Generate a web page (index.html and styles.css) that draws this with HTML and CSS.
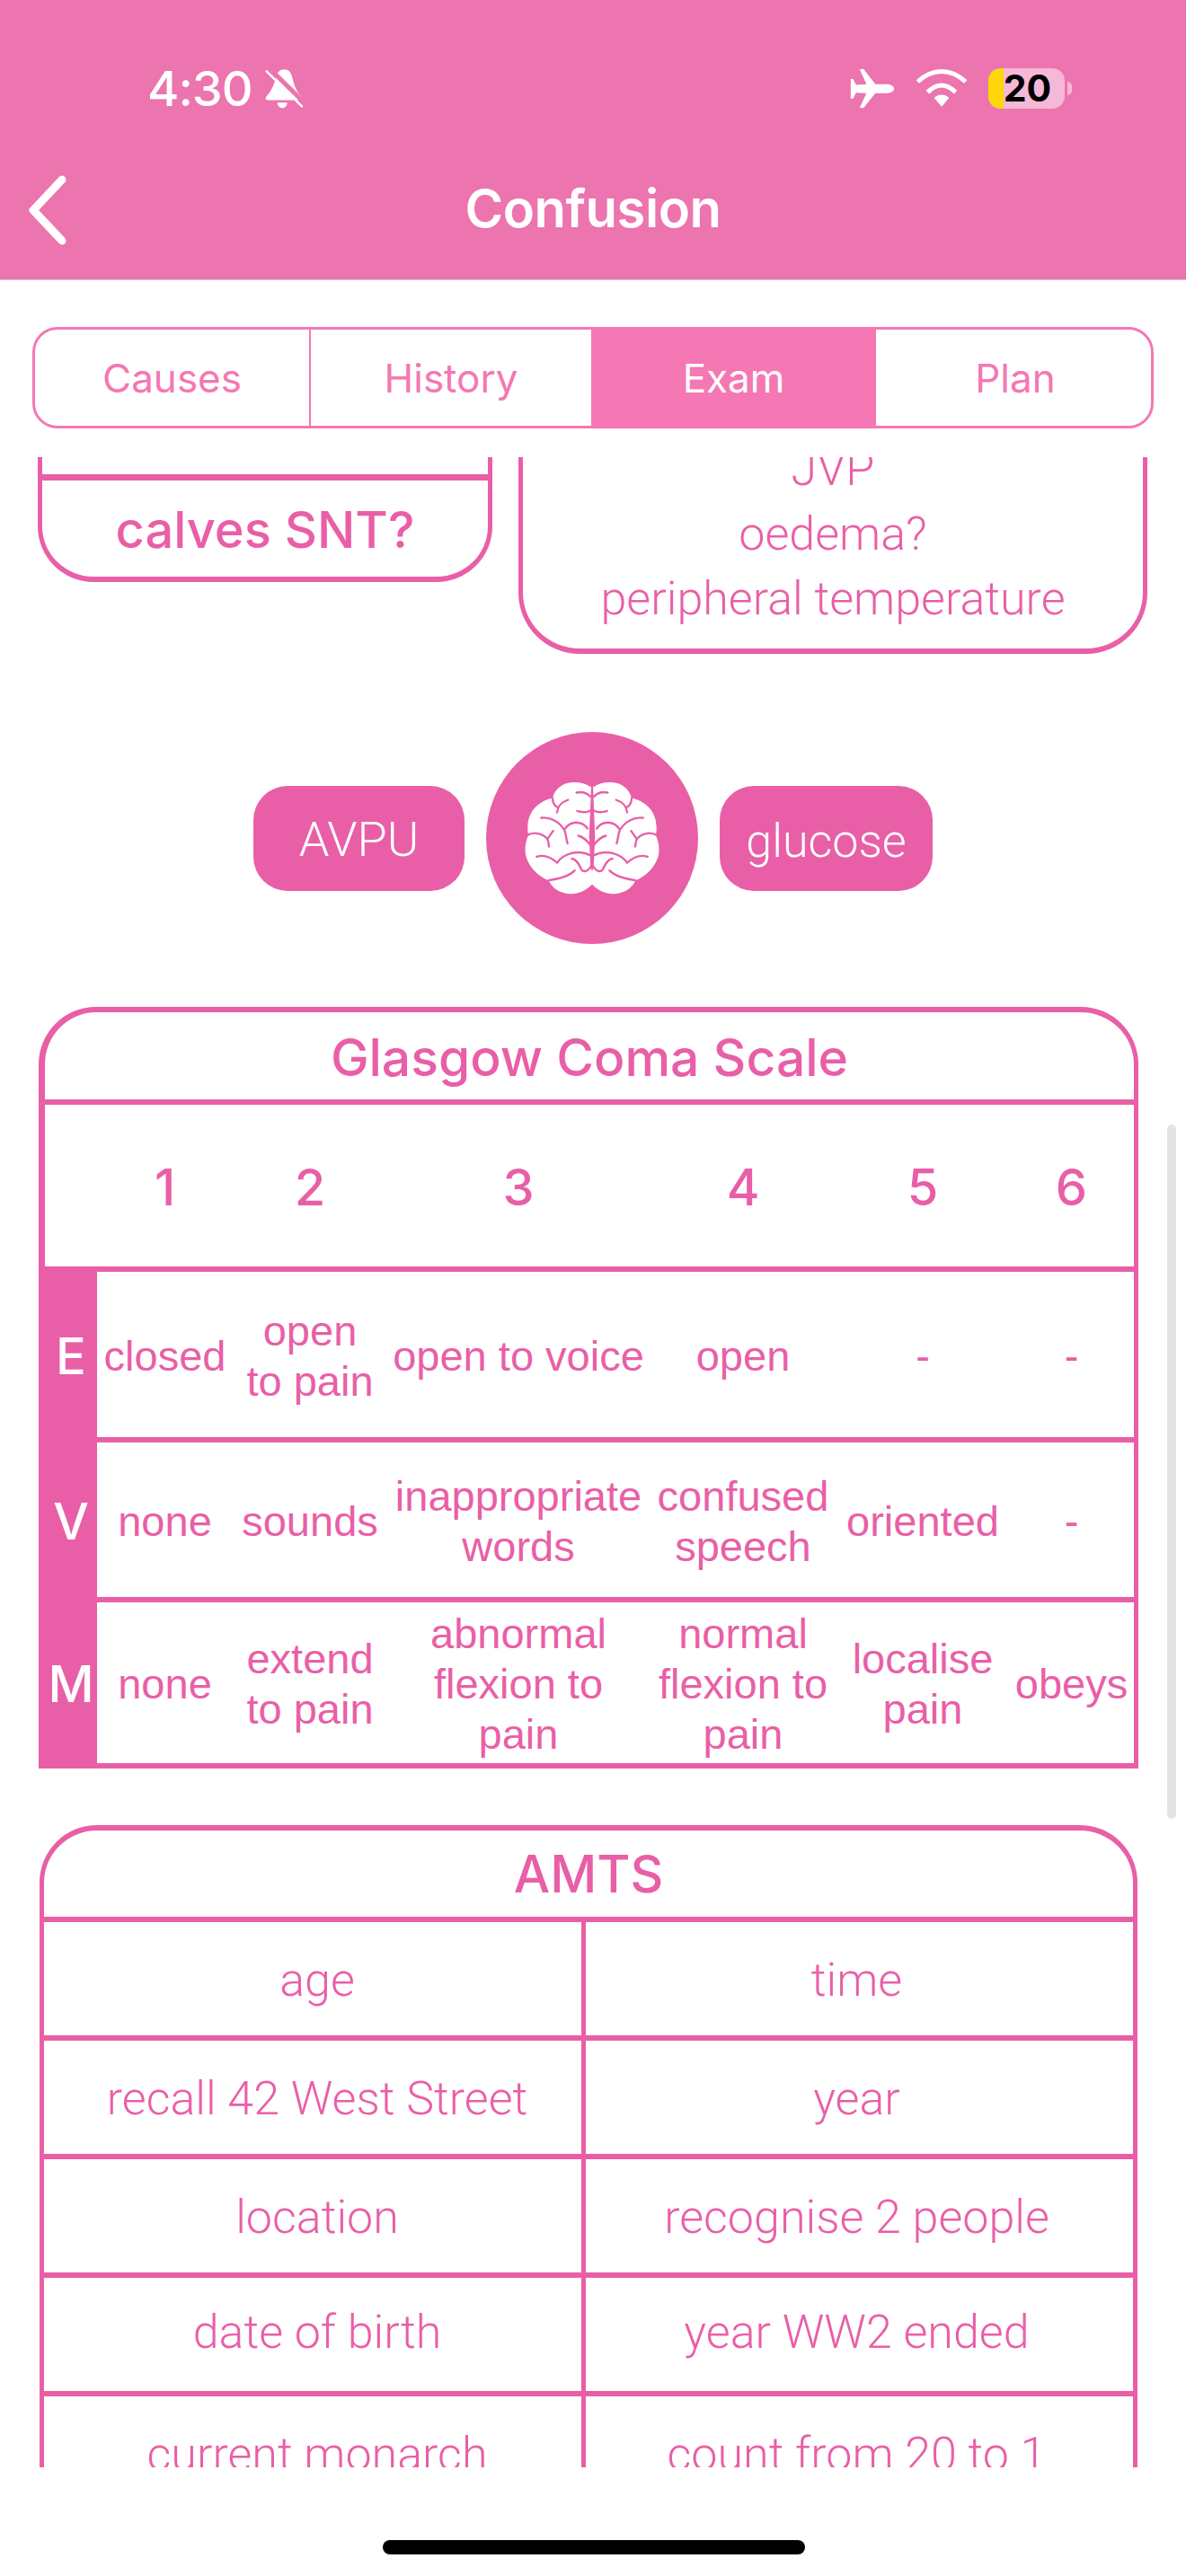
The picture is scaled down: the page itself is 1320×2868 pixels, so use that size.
FILE: index.html
```html
<!DOCTYPE html>
<html lang="en">
    <head>
        <meta charset="UTF-8" />
        <meta name="viewport" content="width=device-width, initial-scale=1.0" />
        <title>Confusion</title>
        <link rel="stylesheet" href="styles.css">
    </head>
    <body>
        <header class="top-bar">
            <div class="status-bar">
                <div class="status-left">
                    <span class="clock">4:30</span>
                    <svg class="icon-bell" viewBox="462 78 128 134">
                        <path fill="#fff" d="M526 82C540 82 548 92 552 108C558 135 566 155 582 172C586 178 584 184 576 184H472C464 184 462 178 466 172C482 155 492 135 498 108C502 92 512 82 526 82Z" />
                        <path fill="#fff" d="M502 192H536C534 204 526 210 519 210C512 210 504 204 502 192Z" />
                        <path stroke="#ec74af" stroke-width="15" d="M478 80L596 196" />
                        <path stroke="#fff" stroke-width="7" stroke-linecap="round" d="M467 88L584 204" />
                    </svg>
                </div>
                <div class="status-right">
                    <svg class="icon-plane" viewBox="80 76 150 136">
                        <path fill="#fff" d="M228 145C228 135 215 130 200 130H165L125 78L112 80L135 130L100 132L90 112H82V178H90L100 158L135 160L112 208L125 210L165 160H200C215 160 228 155 228 145Z" />
                    </svg>
                    <svg class="icon-wifi" viewBox="298 76 174 126">
                        <path fill="none" stroke="#fff" stroke-width="15" d="M305 118C355 72 415 72 465 118" />
                        <path fill="none" stroke="#fff" stroke-width="15" d="M338 153C370 122 400 122 432 153" />
                        <path fill="#fff" d="M360 172C375 158 395 158 410 172L385 201Z" />
                    </svg>
                    <div class="battery">
                        <div class="battery-body">
                            <span class="battery-level"></span>
                            <span class="battery-num">20</span>
                        </div>
                        <span class="battery-nub"></span>
                    </div>
                </div>
            </div>
            <div class="nav-bar">
                <svg class="icon-back" viewBox="0 0 46 78">
                    <path fill="none" stroke="#fff" stroke-width="9" stroke-linecap="round" stroke-linejoin="round" d="M39 5L7 39L39 73" />
                </svg>
                <h1>Confusion</h1>
            </div>
        </header>

        <nav class="tabs">
            <a class="tab">Causes</a>
            <a class="tab">History</a>
            <a class="tab active">Exam</a>
            <a class="tab tab-plan">Plan</a>
        </nav>

        <main class="scroll-area">
            <div class="scroll-bar"></div>
            <section class="top-cards">
                <div class="card-left">
                    <div class="card-left-top"></div>
                    <div class="card-left-text">calves SNT?</div>
                </div>
                <div class="card-right">
                    <p>JVP</p>
                    <p>oedema?</p>
                    <p>peripheral temperature</p>
                </div>
            </section>

            <section class="neuro-row">
                <div class="pill pill-avpu">AVPU</div>
                <div class="brain-circle">
                    <svg class="icon-brain" viewBox="195 215 450 380">
                        <path fill="#fff" d="M412 232C400 222 375 216 350 218C320 220 295 240 288 270C245 280 205 310 205 370C205 378 205 385 208 392C200 410 195 430 197 450C200 490 235 530 275 545C285 570 315 590 350 590C380 590 405 575 420 558C435 575 460 590 490 590C525 590 555 570 565 545C605 530 640 490 643 450C645 430 640 410 632 392C635 385 635 378 635 370C635 310 595 280 552 270C545 240 520 220 490 218C465 216 440 222 428 232Z" />
                        <path fill="#e95fa7" d="M417 222H423L426 310L430 400L425 500L420 515L415 500L410 400L414 310Z" />
                        <g id="brain-folds" fill="none" stroke="#e95fa7" stroke-width="7" stroke-linecap="round">
                            <path d="M414 265C400 250 385 248 368 252" />
                            <path d="M340 276C322 282 305 295 303 318M288 270C288 285 295 295 303 300" />
                            <path d="M414 312C400 320 385 318 370 313" />
                            <path d="M250 336C280 332 312 350 328 378C334 395 334 410 338 422" />
                            <path d="M330 372C350 345 385 345 405 372" />
                            <path d="M374 396C390 400 405 415 412 425" />
                            <path d="M208 392C230 382 260 390 272 410C276 420 274 425 276 432M272 405C280 395 285 385 290 380" />
                            <path d="M235 466C260 458 285 470 303 486C325 455 375 440 415 462" />
                            <path d="M275 545C310 540 345 530 362 512" />
                            <path d="M352 472C370 475 378 495 385 510C395 520 410 512 416 498" />
                        </g>
                        <use href="#brain-folds" transform="translate(840) scale(-1 1)" />
                    </svg>
                </div>
                <div class="pill pill-glucose">glucose</div>
            </section>

            <section class="gcs">
                <h2 class="card-title">Glasgow Coma Scale</h2>
                <div class="gcs-row gcs-head">
                    <div></div><div>1</div><div>2</div><div>3</div><div>4</div><div>5</div><div>6</div>
                </div>
                <div class="gcs-row gcs-e">
                    <div class="gcs-key">E</div>
                    <div>closed</div>
                    <div>open<br>to pain</div>
                    <div>open to voice</div>
                    <div>open</div>
                    <div>-</div>
                    <div>-</div>
                </div>
                <div class="gcs-row gcs-v">
                    <div class="gcs-key">V</div>
                    <div>none</div>
                    <div>sounds</div>
                    <div>inappropriate<br>words</div>
                    <div>confused<br>speech</div>
                    <div>oriented</div>
                    <div>-</div>
                </div>
                <div class="gcs-row gcs-m">
                    <div class="gcs-key">M</div>
                    <div>none</div>
                    <div>extend<br>to pain</div>
                    <div>abnormal<br>flexion to<br>pain</div>
                    <div>normal<br>flexion to<br>pain</div>
                    <div>localise<br>pain</div>
                    <div>obeys</div>
                </div>
            </section>

            <section class="amts">
                <h2 class="card-title">AMTS</h2>
                <div class="amts-row"><div>age</div><div>time</div></div>
                <div class="amts-row"><div>recall 42 West Street</div><div>year</div></div>
                <div class="amts-row"><div>location</div><div>recognise 2 people</div></div>
                <div class="amts-row amts-row-short"><div>date of birth</div><div>year WW2 ended</div></div>
                <div class="amts-row"><div>current monarch</div><div>count from 20 to 1</div></div>
            </section>
        </main>

        <footer class="home-area">
            <div class="home-bar"></div>
        </footer>
    </body>
</html>
```

FILE: styles.css
```css
* {
    box-sizing: border-box;
}

body {
    display: flex;
    flex-direction: column;
    width: 1320px;
    height: 2868px;
    margin: 0;
    overflow: hidden;
    color: #e95fa7;
    background-color: #fff;
    font-family: "Roboto", "Liberation Sans", sans-serif;
    font-weight: 300;
}

/* top bar */
.top-bar {
    height: 312px;
    flex: none;
    color: #fff;
    background-color: #ec74af;
    border-bottom: 1px solid #d9c9d2;
}

.status-bar {
    display: flex;
    justify-content: space-between;
    align-items: center;
    height: 74px;
    margin-top: 61px;
    padding: 0 127px 0 164px;
}

.status-left,
.status-right {
    display: flex;
    align-items: center;
}

.clock {
    font-family: "Inter", "Liberation Sans", sans-serif;
    font-size: 54px;
    font-weight: 500;
    letter-spacing: -1px;
}

.icon-bell {
    width: 43px;
    height: 45px;
    margin-left: 14px;
}

.icon-plane {
    width: 50px;
    height: 45px;
}

.icon-wifi {
    width: 58px;
    height: 42px;
    margin-left: 23px;
}

.battery {
    display: flex;
    align-items: center;
    margin-left: 23px;
}

.battery-body {
    position: relative;
    display: flex;
    justify-content: center;
    align-items: center;
    width: 85px;
    height: 45px;
    overflow: hidden;
    border-radius: 14px;
    background-color: #f5b9d7;
}

.battery-level {
    position: absolute;
    top: 0;
    bottom: 0;
    left: 0;
    width: 17px;
    background-color: #ffd60a;
}

.battery-num {
    position: relative;
    padding-left: 2px;
    color: #000;
    font-family: "Inter", "Liberation Sans", sans-serif;
    font-size: 41px;
    font-weight: 700;
}

.battery-nub {
    width: 5px;
    height: 15px;
    margin-left: 3px;
    border-radius: 0 8px 8px 0;
    background-color: #f5b9d7;
}

.nav-bar {
    position: relative;
    display: flex;
    justify-content: center;
    align-items: center;
    height: 76px;
    margin-top: 60px;
}

.nav-bar h1 {
    margin: 0 0 2px;
    font-family: "Inter", "Liberation Sans", sans-serif;
    font-size: 58px;
    font-weight: 600;
    letter-spacing: -0.5px;
}

.icon-back {
    position: absolute;
    top: 0;
    left: 30px;
    width: 46px;
    height: 78px;
}

/* tabs */
.tabs {
    display: grid;
    grid-template-columns: 307px 312px 317px 1fr;
    flex: none;
    height: 113px;
    margin: 52px 36px 32px;
    overflow: hidden;
    border: 3px solid #f577b3;
    border-radius: 28px;
}

.tab {
    display: flex;
    justify-content: center;
    align-items: center;
    color: #f577b3;
    font-family: "Inter", "Liberation Sans", sans-serif;
    font-size: 44px;
    font-weight: 400;
}

.tab:first-child {
    border-right: 2px solid #f577b3;
}

.tab.active {
    color: #fff;
    background-color: #f577b3;
}

.tab-plan {
    padding-left: 4px;
}

/* scrolling content */
.scroll-area {
    position: relative;
    flex: none;
    height: 2238px;
    overflow: hidden;
}

.scroll-bar {
    position: absolute;
    top: 743px;
    right: 11px;
    width: 10px;
    height: 773px;
    border-radius: 5px;
    background-color: #e4e4e4;
}

.top-cards {
    display: flex;
    align-items: flex-start;
    gap: 29px;
    margin: -40px 0 0 42px;
}

.card-left {
    width: 506px;
    height: 179px;
    border: solid #e95fa7;
    border-width: 0 5px 6px;
    border-radius: 0 0 62px 62px;
}

.card-left-top {
    height: 66px;
    border-bottom: 7px solid #e95fa7;
}

.card-left-text {
    padding-top: 22px;
    font-family: "Inter", "Liberation Sans", sans-serif;
    font-size: 56px;
    font-weight: 500;
    line-height: 66px;
    text-align: center;
}

.card-right {
    width: 700px;
    height: 259px;
    padding-top: 18px;
    border: solid #e95fa7;
    border-width: 0 5px 6px;
    border-radius: 0 0 68px 68px;
    font-size: 52px;
    line-height: 72px;
    text-align: center;
}

.card-right p {
    margin: 0;
}

.neuro-row {
    display: flex;
    justify-content: center;
    align-items: center;
    gap: 24px;
    margin-top: 87px;
}

.pill {
    display: flex;
    justify-content: center;
    align-items: center;
    height: 117px;
    border-radius: 38px;
    color: #fff;
    background-color: #e95fa7;
    font-size: 52px;
}

.pill-avpu {
    width: 235px;
    padding-top: 3px;
    font-size: 54px;
}

.pill-glucose {
    width: 237px;
    padding-top: 6px;
}

.brain-circle {
    display: flex;
    justify-content: center;
    align-items: center;
    width: 236px;
    height: 236px;
    border-radius: 50%;
    background-color: #e95fa7;
}

.icon-brain {
    width: 150px;
    height: 127px;
}

/* score tables */
.gcs,
.amts {
    overflow: hidden;
    border: solid #e95fa7;
    border-width: 6px 5px;
    border-radius: 64px 64px 0 0;
}

.gcs {
    width: 1224px;
    margin: 70px 0 0 43px;
    border-left-width: 7px;
}

.amts {
    width: 1222px;
    margin: 63px 0 0 44px;
}

.card-title {
    margin: 0;
    font-family: "Inter", "Liberation Sans", sans-serif;
    font-size: 57px;
    font-weight: 500;
    text-align: center;
}

.gcs .card-title {
    height: 97px;
    line-height: 102px;
}

.amts .card-title {
    height: 96px;
    line-height: 98px;
}

.gcs-row {
    display: grid;
    grid-template-columns: 58px 151px 172px 292px 208px 192px 1fr;
    border-top: 6px solid #e95fa7;
    font-family: "Liberation Sans", sans-serif;
    font-size: 47px;
    font-weight: 400;
    line-height: 56px;
    text-align: center;
}

.gcs-row > div {
    display: flex;
    justify-content: center;
    align-items: center;
    padding-top: 3px;
}

.gcs-head {
    height: 186px;
    font-family: "Inter", "Liberation Sans", sans-serif;
    font-size: 56px;
    font-weight: 500;
}

.gcs-e {
    height: 190px;
}

.gcs-v {
    height: 178px;
}

.gcs-m {
    height: 185px;
}

.gcs-row > .gcs-key {
    color: #fff;
    background-color: #e95fa7;
    font-family: "Inter", "Liberation Sans", sans-serif;
    font-size: 56px;
    font-weight: 500;
}

.amts-row {
    display: grid;
    grid-template-columns: 603px 1fr;
    height: 132px;
    border-top: 6px solid #e95fa7;
    font-size: 52px;
}

.amts-row > div {
    display: flex;
    justify-content: center;
    align-items: center;
    padding-top: 2px;
}

.amts-row > div:first-child {
    padding-left: 10px;
    border-right: 5px solid #e95fa7;
}

.amts-row > div:last-child {
    padding-right: 6px;
}

.amts-row-short > div {
    padding-top: 0;
    padding-bottom: 6px;
}

/* home indicator */
.home-area {
    display: flex;
    flex: none;
    justify-content: center;
    padding-top: 81px;
}

.home-bar {
    width: 470px;
    height: 16px;
    margin-right: -2px;
    border-radius: 8px;
    background-color: #000;
}
```
